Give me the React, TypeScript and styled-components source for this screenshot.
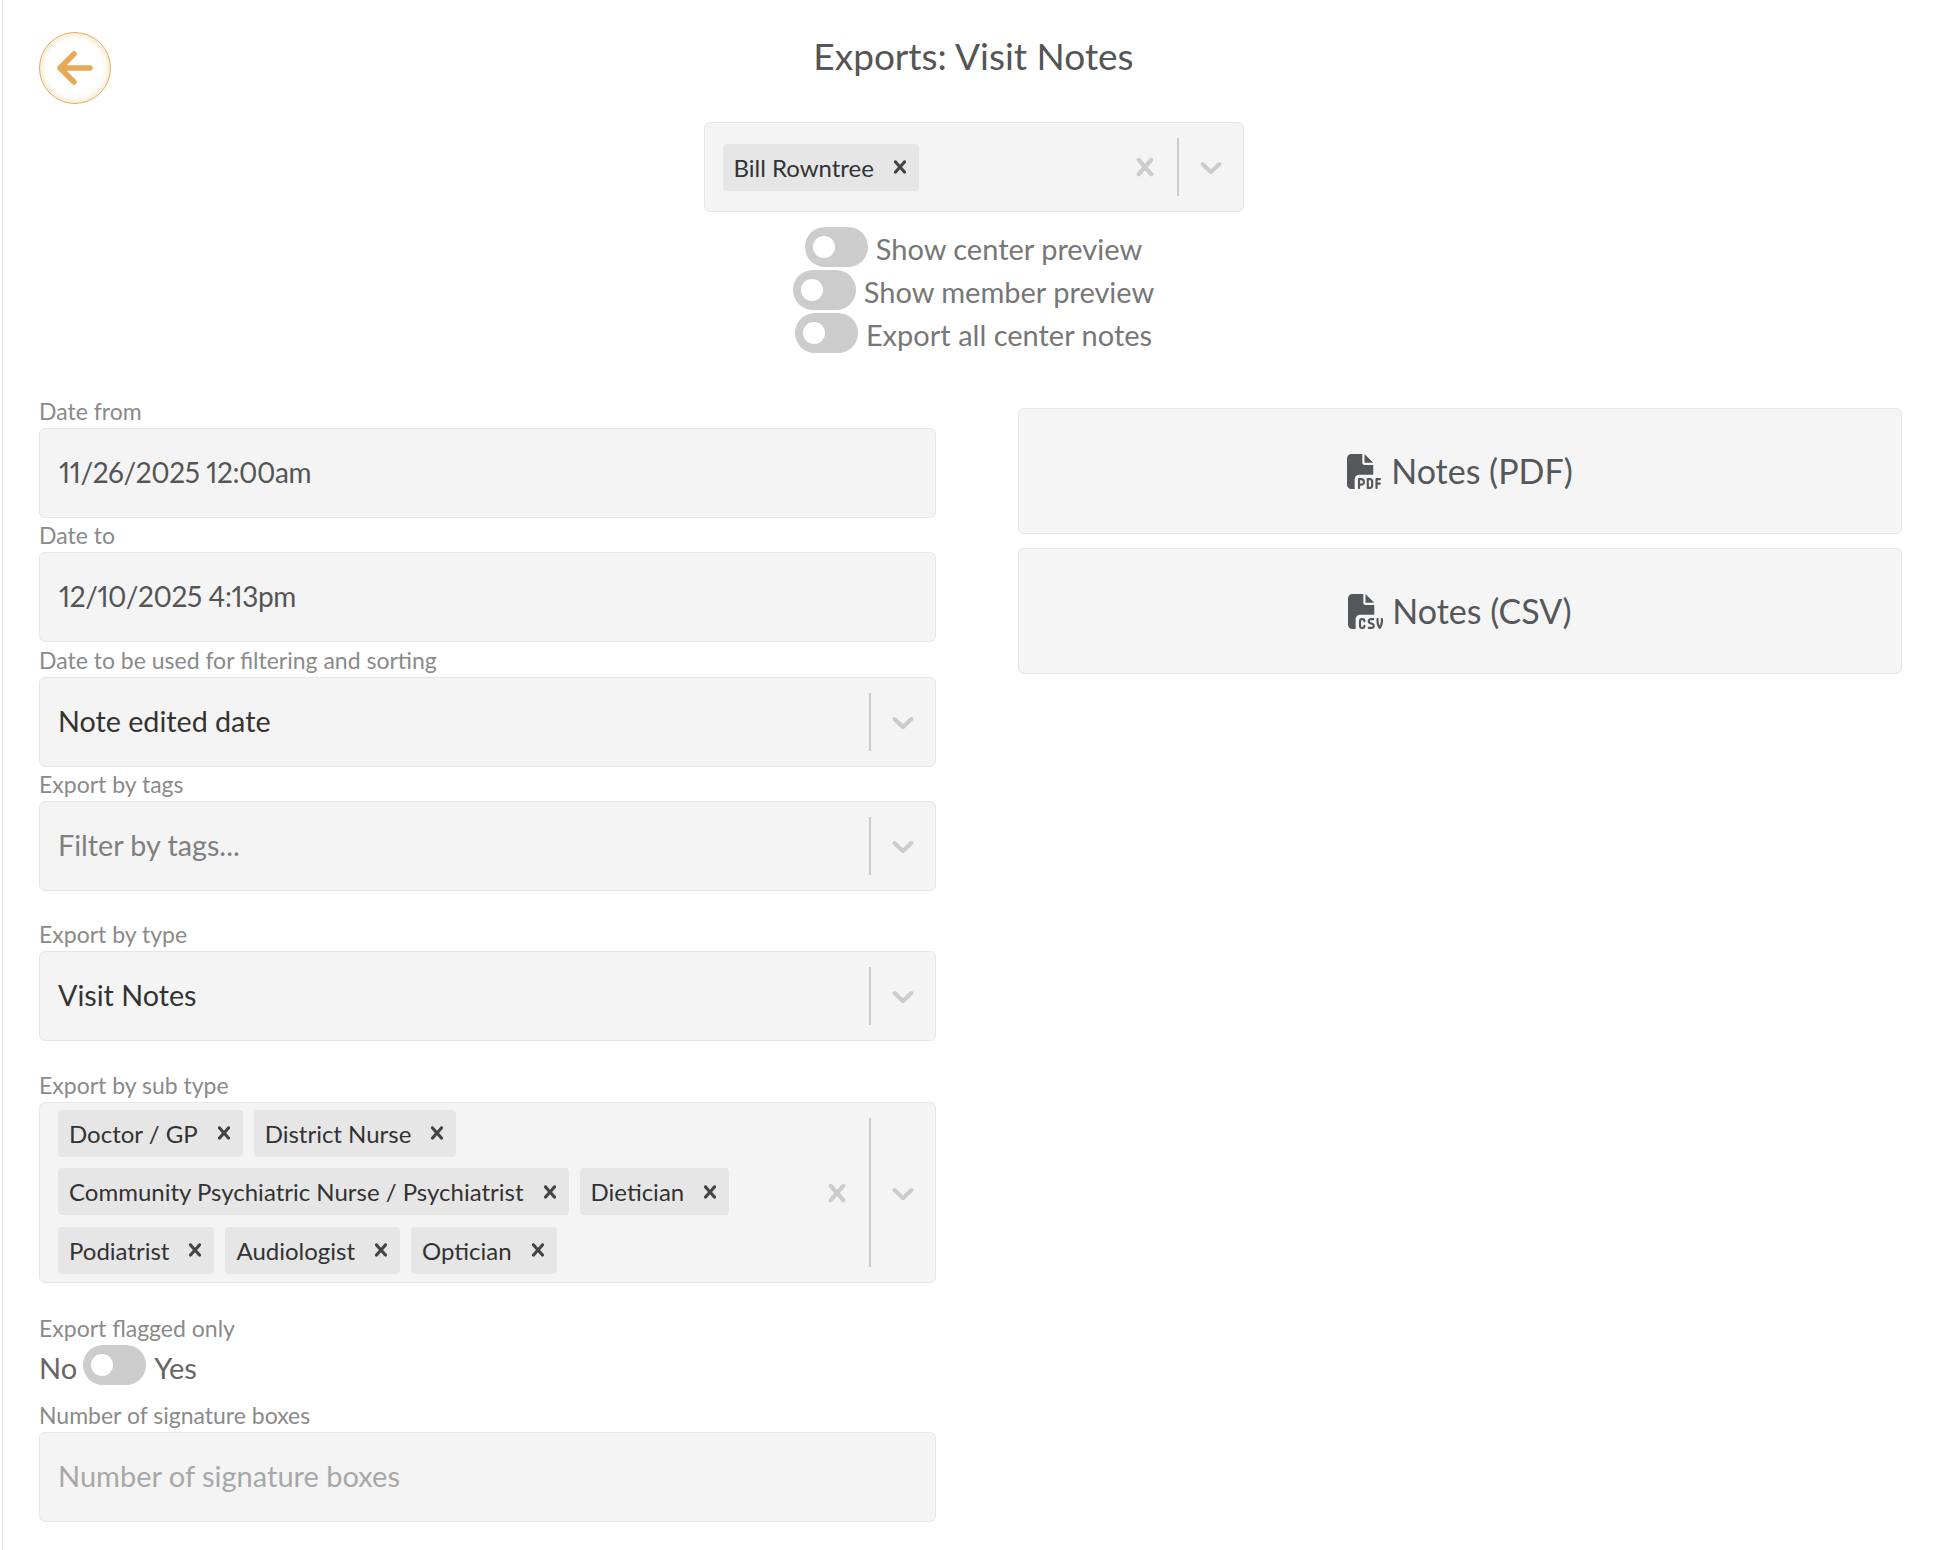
import React from 'react';
import styled, {createGlobalStyle} from 'styled-components';
import {FaFileCsv, FaFilePdf} from 'react-icons/fa6';

const GlobalStyle = createGlobalStyle`
  html, body {
    margin: 0;
    background: #fff;
  }
  body {
    font-family: "Lato", "Open Sans", Arial, sans-serif;
    color: #555;
  }
  * {
    box-sizing: border-box;
  }
`;

const CrossIcon = ({size = 36}: {size?: number}) => (
  <svg width={size} height={size} viewBox="0 0 20 20" fill="currentColor">
    <path d="M14.348 14.849c-0.469 0.469-1.229 0.469-1.697 0l-2.651-3.030-2.651 3.029c-0.469 0.469-1.229 0.469-1.697 0-0.469-0.469-0.469-1.229 0-1.697l2.758-3.15-2.759-3.152c-0.469-0.469-0.469-1.228 0-1.697s1.228-0.469 1.697 0l2.652 3.031 2.651-3.031c0.469-0.469 1.228-0.469 1.697 0s0.469 1.229 0 1.697l-2.758 3.152 2.758 3.15c0.469 0.469 0.469 1.229 0 1.698z" />
  </svg>
);

const ChevronIcon = () => (
  <svg width={36} height={36} viewBox="0 0 20 20" fill="currentColor">
    <path d="M4.516 7.548c0.436-0.446 1.043-0.481 1.576 0l3.908 3.747 3.908-3.747c0.533-0.481 1.141-0.446 1.576 0 0.436 0.445 0.408 1.197 0 1.615-0.406 0.418-4.695 4.502-4.695 4.502-0.217 0.223-0.502 0.335-0.789 0.335s-0.572-0.112-0.79-0.335c0 0-4.287-4.084-4.695-4.502s-0.436-1.17 0-1.615z" />
  </svg>
);

const Tag = ({label}: {label: string}) => (
  <TagBox>
    <span>{label}</span>
    <TagRemove>
      <CrossIcon size={26} />
    </TagRemove>
  </TagBox>
);

const Indicators = ({clearable}: {clearable?: boolean}) => (
  <IndicatorRow>
    {clearable && (
      <Indicator>
        <CrossIcon />
      </Indicator>
    )}
    <Separator />
    <Indicator>
      <ChevronIcon />
    </Indicator>
  </IndicatorRow>
);

const Toggle = () => (
  <Track>
    <Knob />
  </Track>
);

const subTypes = [
  'Doctor / GP',
  'District Nurse',
  'Community Psychiatric Nurse / Psychiatrist',
  'Dietician',
  'Podiatrist',
  'Audiologist',
  'Optician',
];

const App: React.FC = () => (
  <Page>
    <GlobalStyle />
    <Header>
      <BackButton aria-label="Back">
        <svg width="40" height="36" viewBox="0 0 40 36" fill="none" stroke="#e5a957" strokeWidth="5.5" strokeLinecap="round" strokeLinejoin="round">
          <path d="M35 18H5M19 4L5 18l14 14" />
        </svg>
      </BackButton>
      <Title>Exports: Visit Notes</Title>
    </Header>

    <TopControls>
      <TopSelect>
        <TagList>
          <Tag label="Bill Rowntree" />
        </TagList>
        <Indicators clearable />
      </TopSelect>
      <ToggleRows>
        <ToggleRow>
          <Toggle />
          <ToggleText>Show center preview</ToggleText>
        </ToggleRow>
        <ToggleRow>
          <Toggle />
          <ToggleText>Show member preview</ToggleText>
        </ToggleRow>
        <ToggleRow>
          <Toggle />
          <ToggleText>Export all center notes</ToggleText>
        </ToggleRow>
      </ToggleRows>
    </TopControls>

    <Columns>
      <FormColumn>
        <Field>
          <Label>Date from</Label>
          <DateBox>11/26/2025 12:00am</DateBox>
        </Field>
        <Field $after={6}>
          <Label>Date to</Label>
          <DateBox>12/10/2025 4:13pm</DateBox>
        </Field>
        <Field>
          <Label>Date to be used for filtering and sorting</Label>
          <SelectBox>
            <SelectValue $tone="#333">Note edited date</SelectValue>
            <Indicators />
          </SelectBox>
        </Field>
        <Field $after={31}>
          <Label>Export by tags</Label>
          <SelectBox>
            <SelectValue $tone="#808080">Filter by tags...</SelectValue>
            <Indicators />
          </SelectBox>
        </Field>
        <Field $after={32}>
          <Label>Export by type</Label>
          <SelectBox>
            <SelectValue $tone="#333">Visit Notes</SelectValue>
            <Indicators />
          </SelectBox>
        </Field>
        <Field $after={33}>
          <Label>Export by sub type</Label>
          <MultiBox>
            <TagList>
              {subTypes.map(name => (
                <Tag key={name} label={name} />
              ))}
            </TagList>
            <Indicators clearable />
          </MultiBox>
        </Field>
        <Field $after={18}>
          <Label>Export flagged only</Label>
          <FlagRow>
            <FlagText>No</FlagText>
            <Toggle />
            <FlagText>Yes</FlagText>
          </FlagRow>
        </Field>
        <Field>
          <Label>Number of signature boxes</Label>
          <PlaceholderBox>Number of signature boxes</PlaceholderBox>
        </Field>
      </FormColumn>

      <ExportColumn>
        <ExportButton>
          <FaFilePdf size={35} />
          <ExportLabel>Notes (PDF)</ExportLabel>
        </ExportButton>
        <ExportButton>
          <FaFileCsv size={35} />
          <ExportLabel>Notes (CSV)</ExportLabel>
        </ExportButton>
      </ExportColumn>
    </Columns>
  </Page>
);

export default App;

const Page = styled.div`
  height: 1550px;
  margin-left: 2px;
  padding: 32px 42px 0 36px;
  border-left: 1px solid #e4e4e4;
  overflow: hidden;
`;

const Header = styled.div`
  position: relative;
  height: 90px;
`;

const BackButton = styled.button`
  position: absolute;
  left: 0;
  top: 0;
  width: 72px;
  height: 72px;
  padding: 0;
  display: flex;
  align-items: center;
  justify-content: center;
  background: #fff;
  border: 1.5px solid #e5a957;
  border-radius: 50%;
  box-shadow: inset 0 0 8px rgba(229, 169, 87, 0.45);
`;

const Title = styled.h1`
  margin: 0;
  padding-left: 6px;
  text-align: center;
  font-size: 37px;
  line-height: 48px;
  font-weight: 400;
  color: #555;
`;

const TopControls = styled.div`
  display: flex;
  flex-direction: column;
  align-items: center;
  padding-left: 6px;
`;

const fieldSurface = `
  background: #f4f4f4;
  border: 1px solid #e6e6e6;
  border-radius: 6px;
`;

const TopSelect = styled.div`
  ${fieldSurface}
  width: 540px;
  height: 90px;
  display: flex;
  align-items: center;
`;

const TagList = styled.div`
  flex: 1;
  min-width: 0;
  display: flex;
  flex-wrap: wrap;
  gap: 11.5px 11px;
  padding-left: 18px;
`;

const TagBox = styled.div`
  height: 47px;
  display: flex;
  align-items: center;
  padding-left: 11px;
  padding-right: 6px;
  background: #e6e6e6;
  border-radius: 4px;
  font-size: 24px;
  color: #333;
  white-space: nowrap;
`;

const TagRemove = styled.span`
  display: flex;
  margin-left: 13px;
  color: #444;
`;

const IndicatorRow = styled.div`
  align-self: stretch;
  display: flex;
  align-items: center;
`;

const Indicator = styled.div`
  width: 64px;
  display: flex;
  align-items: center;
  justify-content: center;
  color: #ccc;
`;

const Separator = styled.div`
  align-self: stretch;
  width: 2px;
  margin: 15px 0;
  background: #ccc;
`;

const ToggleRows = styled.div`
  margin-top: 15px;
  display: flex;
  flex-direction: column;
  align-items: center;
  gap: 3px;
`;

const ToggleRow = styled.div`
  display: flex;
  align-items: center;
  gap: 8px;
  font-size: 29px;
  line-height: 40px;
  color: #777;
`;

const ToggleText = styled.span`
  position: relative;
  top: 2px;
`;

const Track = styled.div`
  width: 63px;
  height: 40px;
  padding: 9px 8px;
  background: #ccc;
  border-radius: 20px;
`;

const Knob = styled.div`
  width: 22px;
  height: 22px;
  background: #fff;
  border-radius: 50%;
`;

const Columns = styled.div`
  margin-top: 46px;
  display: grid;
  grid-template-columns: 897px 884px;
  justify-content: space-between;
  align-items: start;
`;

const FormColumn = styled.div`
  display: flex;
  flex-direction: column;
`;

const Field = styled.div<{$after?: number}>`
  margin-bottom: ${p => p.$after ?? 5}px;
`;

const Label = styled.div`
  height: 29px;
  font-size: 23px;
  line-height: 24px;
  color: #8a8a8a;
`;

const DateBox = styled.div`
  ${fieldSurface}
  height: 90px;
  display: flex;
  align-items: center;
  padding: 0 0 3px 19px;
  font-size: 28px;
  font-variant-numeric: proportional-nums;
  letter-spacing: -0.4px;
  color: #555;
`;

const PlaceholderBox = styled.div`
  ${fieldSurface}
  height: 90px;
  display: flex;
  align-items: center;
  padding: 0 0 3px 18px;
  font-size: 29px;
  color: #a8a8a8;
`;

const SelectBox = styled.div`
  ${fieldSurface}
  height: 90px;
  display: flex;
  align-items: center;
  justify-content: space-between;
`;

const SelectValue = styled.div<{$tone: string}>`
  padding: 0 0 3px 18px;
  font-size: 28.7px;
  color: ${p => p.$tone};
`;

const MultiBox = styled.div`
  ${fieldSurface}
  height: 181px;
  display: flex;
  align-items: center;

  ${TagList} {
    margin-bottom: 2px;
  }
`;

const FlagRow = styled.div`
  height: 40px;
  display: flex;
  align-items: center;
  gap: 6px;
  font-size: 29px;
  color: #666;
`;

const FlagText = styled.span`
  position: relative;
  top: 2px;

  &:last-child {
    margin-left: 2px;
  }
`;

const ExportColumn = styled.div`
  margin-top: 9px;
  display: flex;
  flex-direction: column;
  gap: 14px;
`;

const ExportButton = styled.div`
  background: #f5f5f5;
  border: 1px solid #e6e6e6;
  border-radius: 6px;
  height: 126px;
  display: flex;
  align-items: center;
  justify-content: center;
  gap: 9px;
  font-size: 34px;
  color: #55585a;
`;

const ExportLabel = styled.span`
  position: relative;
  top: -1px;
`;
